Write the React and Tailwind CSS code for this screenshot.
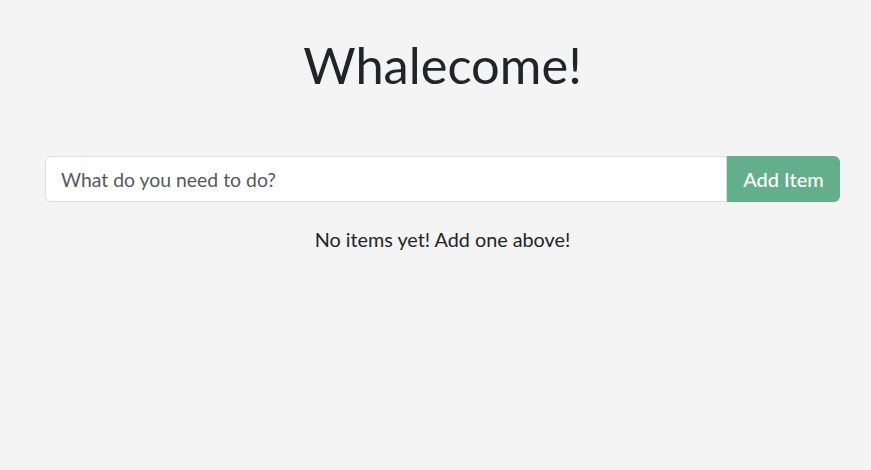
export default function App() {
  return (
    <div className="min-h-[470px] w-full bg-[#f4f4f4] text-[#212529]" style={{ fontFamily: "Lato, 'Open Sans', sans-serif" }}>
      <div className="ml-[45px] w-[795px]">
        <h1 className="pt-[35px] text-center text-[50.6px] font-normal leading-[60px]">Whalecome!</h1>
        <div className="mt-[61px] flex h-[46px]">
          <input
            className="h-full flex-1 rounded-l-[6px] border border-[#dcdee0] bg-white px-[15px] text-[19.4px] text-[#495057] placeholder:text-[#54595f] outline-none"
            placeholder="What do you need to do?"
            style={{ fontFamily: "Lato, sans-serif" }}
          />
          <button className="h-full w-[113px] rounded-r-[6px] bg-[#63ae8b] text-[20px] font-medium text-white" style={{ fontFamily: "Lato, sans-serif" }}>
            Add Item
          </button>
        </div>
        <p className="mt-[23px] text-center text-[19.8px] leading-[28px]">No items yet! Add one above!</p>
      </div>
    </div>
  );
}
